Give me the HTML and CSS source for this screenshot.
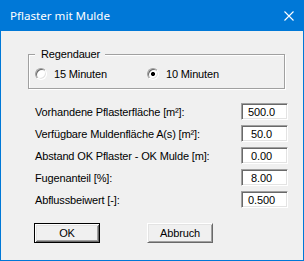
FILE: index.html
```html
<!DOCTYPE html>
<html lang="de">
<head>
    <meta charset="UTF-8">
    <title>Pflaster mit Mulde</title>
    <link rel="stylesheet" href="styles.css">
</head>
<body>
    <div class="dialog">
        <div class="titlebar">
            <span class="title">Pflaster mit Mulde</span>
            <svg class="close" width="10" height="10" viewBox="0 0 10 10">
                <path d="M0.5 0.5 L9.5 9.5 M9.5 0.5 L0.5 9.5" stroke="#fff" stroke-width="1.1" fill="none"/>
            </svg>
        </div>
        <div class="content">
            <div class="group">
                <span class="legend">Regendauer</span>
                <div class="radios">
                    <label class="radio"><input type="radio" name="dauer" value="15"> 15 Minuten</label>
                    <label class="radio"><input type="radio" name="dauer" value="10" checked> 10 Minuten</label>
                </div>
            </div>

            <div class="fields">
                <label>Vorhandene Pflasterfläche [m²]:</label>
                <input type="text" value="500.0">
                <label>Verfügbare Muldenfläche A(s) [m²]:</label>
                <input type="text" value="50.0">
                <label>Abstand OK Pflaster - OK Mulde [m]:</label>
                <input type="text" value="0.00">
                <label>Fugenanteil [%]:</label>
                <input type="text" value="8.00">
                <label>Abflussbeiwert [-]:</label>
                <input type="text" value="0.500">
            </div>

            <div class="buttons">
                <button class="default">OK</button>
                <button>Abbruch</button>
            </div>
        </div>
    </div>
</body>
</html>
```

FILE: styles.css
```css
body {
    margin: 0;
    font-family: "Liberation Sans", Arial, sans-serif;
    font-size: 11px;
    letter-spacing: -0.15px;
    color: #000;
}
.dialog {
    width: 304px;
    height: 261px;
    box-sizing: border-box;
    border: 1px solid #0078d7;
    border-top: none;
    background: #f0f0f0;
}
.titlebar {
    height: 31px;
    margin: 0 -1px;
    padding: 0 10px;
    box-sizing: border-box;
    background: #0078d7;
    color: #fff;
    display: flex;
    align-items: center;
    justify-content: space-between;
    font-family: "Noto Sans", "Open Sans", sans-serif;
    font-size: 11.6px;
    letter-spacing: 0;
}
.close {
    display: block;
}
.content {
    padding: 23px 14px 0 27px;
}
.group {
    position: relative;
    width: 257px;
    height: 35px;
    box-sizing: border-box;
    border: 1px solid #a0a0a0;
    box-shadow: inset 1px 1px #fff, 1px 1px #fff;
    padding: 13px 0 0 6px;
}
.legend {
    position: absolute;
    top: -8px;
    left: 6px;
    padding: 0 5px 0 6px;
    line-height: 14px;
    background: #f0f0f0;
}
.radios {
    display: grid;
    grid-template-columns: 112px auto;
    height: 12px;
}
.radio {
    display: flex;
    align-items: center;
    gap: 7px;
    line-height: 12px;
}
.radio input {
    appearance: none;
    -webkit-appearance: none;
    margin: 0;
    width: 12px;
    height: 12px;
    border-radius: 50%;
    border: 1px solid;
    border-color: #a0a0a0 #fff #fff #a0a0a0;
    box-shadow: inset 1px 1px #696969, inset -1px -1px #e3e3e3;
    background: #fff;
    box-sizing: border-box;
}
.radio input:checked {
    background: radial-gradient(circle, #000 0 1.8px, #fff 2.3px);
}
.fields {
    margin: 14px 0 0 7px;
    width: 253px;
    display: grid;
    grid-template-columns: 1fr 47px;
    grid-auto-rows: 17px;
    row-gap: 5px;
}
.fields label {
    align-self: center;
    white-space: nowrap;
}
.fields input {
    margin: 0;
    width: 47px;
    height: 17px;
    box-sizing: border-box;
    padding: 0 6px 0 0;
    border: 1px solid;
    border-color: #a0a0a0 #fff #fff #a0a0a0;
    box-shadow: inset 1px 1px #696969, inset -1px -1px #e3e3e3;
    background: #fff;
    font-family: inherit;
    font-size: 11px;
    letter-spacing: -0.15px;
    text-align: center;
    color: #000;
    outline: none;
}
.buttons {
    margin: 15px 0 0 6px;
    display: flex;
    gap: 47px;
}
button {
    width: 66px;
    height: 20px;
    margin: 0;
    padding: 0;
    box-sizing: border-box;
    border: 1px solid;
    border-color: #fff #696969 #696969 #fff;
    box-shadow: inset 1px 1px #e3e3e3, inset -1px -1px #a0a0a0;
    background: #f0f0f0;
    font-family: inherit;
    font-size: 11px;
    letter-spacing: -0.15px;
    color: #000;
}
button.default {
    border-color: #000;
    box-shadow: inset 1px 1px #fff, inset -1px -1px #696969, inset 2px 2px #e3e3e3, inset -2px -2px #a0a0a0;
}
```
